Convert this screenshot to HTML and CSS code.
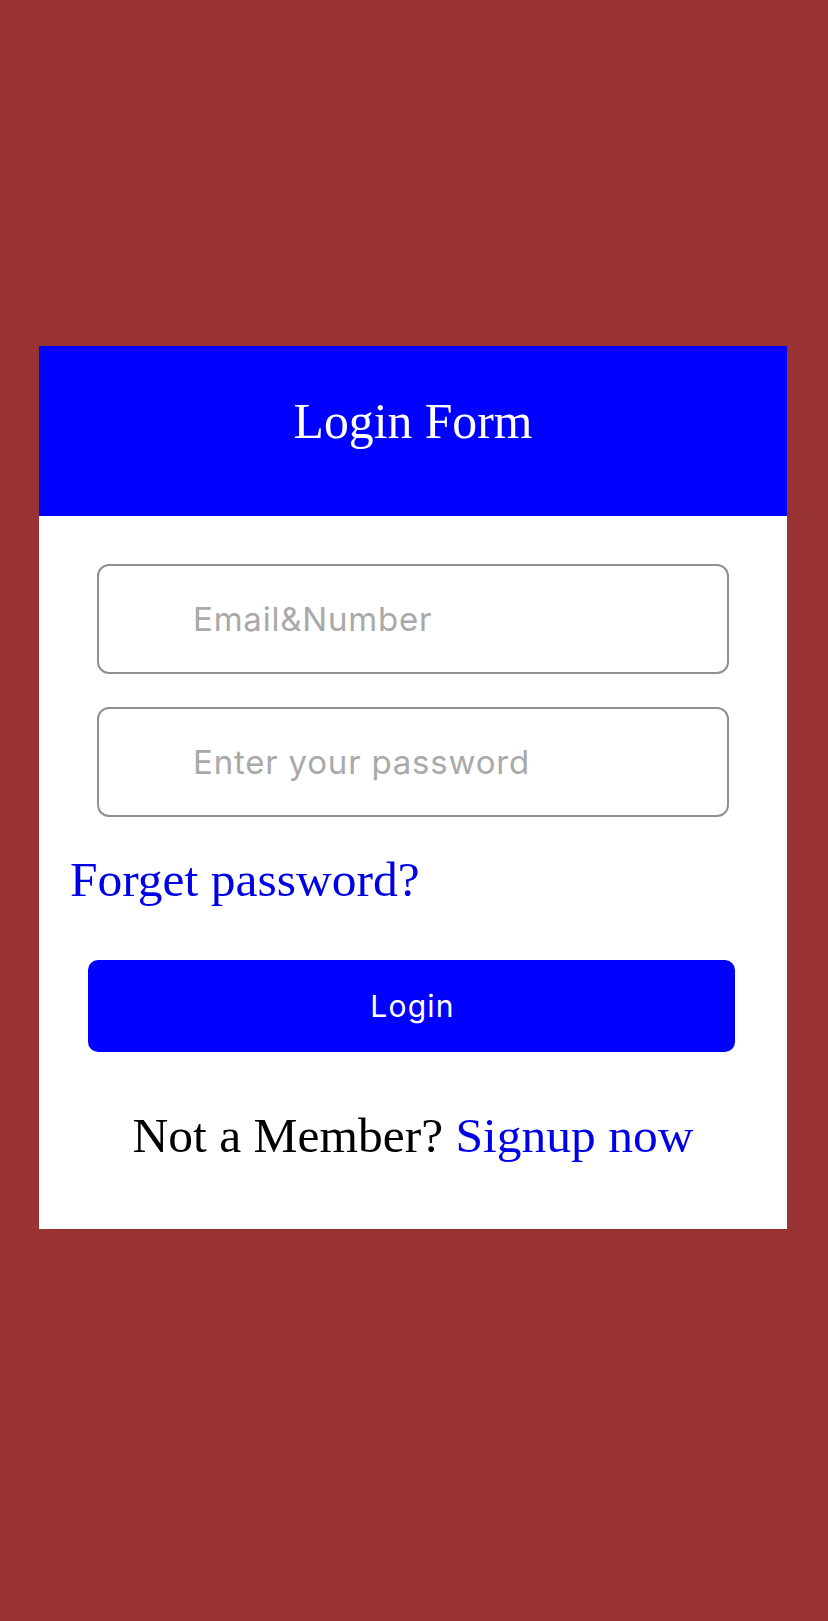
FILE: index.html
```html
<!DOCTYPE html>
<html lang="en">
<head>
<meta charset="utf-8">
<title>Login Form</title>
<link rel="stylesheet" href="styles.css">
</head>
<body>
<div class="card">
  <div class="card-header">
    <h1 class="title">Login Form</h1>
  </div>
  <form class="card-body">
    <input class="field" type="text" placeholder="Email&amp;Number">
    <input class="field field-second" type="password" placeholder="Enter your password">
    <a class="forget" href="#">Forget password?</a>
    <button class="login-btn" type="button">Login</button>
    <p class="signup">Not a Member? <a class="signup-link" href="#">Signup now</a></p>
  </form>
</div>
</body>
</html>
```

FILE: styles.css
```css
html, body {
  margin: 0;
  padding: 0;
}
body {
  background: #993333;
  min-height: 1621px;
  font-family: "Liberation Serif", "Times New Roman", serif;
}
.card {
  margin: 346px 0 0 39px;
  width: 748px;
  background: #ffffff;
}
.card-header {
  box-sizing: border-box;
  height: 170px;
  padding-top: 51px;
  background: #0000ff;
  text-align: center;
}
.title {
  margin: 0;
  font-family: "Liberation Serif", "Times New Roman", serif;
  font-weight: normal;
  font-size: 49.7px;
  line-height: 49px;
  color: #ffffff;
}
.card-body {
  display: flex;
  flex-direction: column;
  align-items: flex-start;
  margin: 0;
  padding: 48px 0 68px 0;
}
.field {
  box-sizing: border-box;
  margin-left: 58px;
  width: 632px;
  height: 110px;
  border: 2px solid #909090;
  border-radius: 12px;
  padding: 0 0 0 94px;
  font-family: Inter, "Noto Sans", sans-serif;
  font-size: 33px;
  letter-spacing: 0.8px;
  color: #333;
  background: #fff;
  outline: none;
}
.field::placeholder {
  color: #a9a9a9;
}
.field-second {
  margin-top: 33px;
}
.forget {
  margin: 38px 0 0 31px;
  font-size: 49.5px;
  line-height: 50px;
  color: #0000e6;
  text-decoration: none;
}
.login-btn {
  margin: 55px 0 0 49px;
  width: 647px;
  height: 92px;
  border: none;
  border-radius: 10px;
  background: #0000ff;
  color: #ffffff;
  font-family: Inter, "Noto Sans", sans-serif;
  font-size: 30px;
  letter-spacing: 1.2px;
  padding: 0 0 0 2px;
}
.signup {
  align-self: stretch;
  margin: 59px 0 0 0;
  text-align: center;
  font-size: 49.5px;
  line-height: 50px;
  color: #000000;
}
.signup-link {
  color: #0000e6;
  text-decoration: none;
}
```
